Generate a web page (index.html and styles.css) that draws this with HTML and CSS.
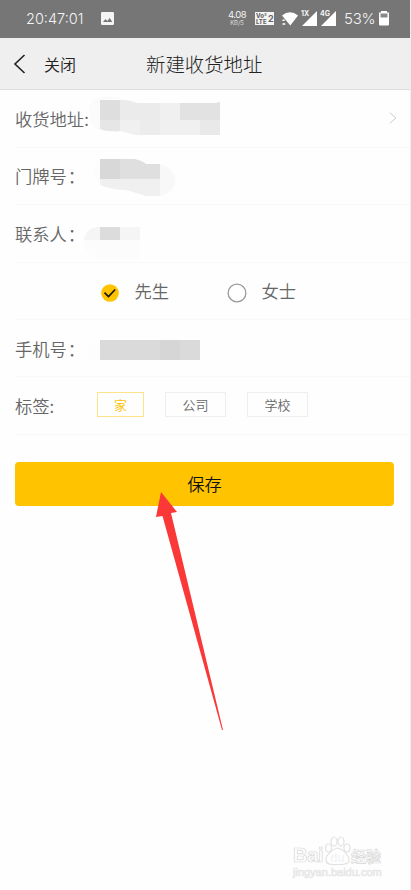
FILE: index.html
```
<!DOCTYPE html>
<html lang="zh-CN">
<head>
<meta charset="utf-8">
<title>新建收货地址</title>
<link rel="stylesheet" href="styles.css">
</head>
<body>
<div class="screen">
  <div class="status">
    <span class="clock">20:47:01</span>
    <svg class="photo" width="13" height="13" viewBox="0 0 13 13"><rect width="13" height="13" rx="1.2" fill="#f4f4f4"/><path d="M2 10l2.500-3 1.800 2 2.400-3L11.300 10z" fill="#767676"/></svg>
    <span class="speed"><b>4.08</b><i>KB/S</i></span>
    <span class="volte"><span class="vo"><b>Vo²</b><b>LTE</b></span><span>2</span></span>
    <svg class="wifi" width="16" height="14" viewBox="0 0 16 14"><path d="M0 3.500Q8-2.800 16 3.500L8.300 13.500z" fill="#fff"/><path d="M.5 8.300h2.200M.5 12h2.800" stroke="#fff" stroke-width="1.600"/></svg>
    <span class="signal"><svg width="15" height="15"><path d="M15 0v15H0z" fill="#fff"/></svg><em>1X</em></span>
    <span class="signal"><svg width="15" height="15"><path d="M15 0v15H0z" fill="#fff"/></svg><em>4G</em></span>
    <span class="percent">53%</span>
    <svg class="battery" width="10" height="15" viewBox="0 0 10 15"><path d="M2 0h6v1.500h2V13.500q0 1-1 1H1q-1 0-1-1v-12h2z" fill="#fff"/><path d="M1.500 2.500h7v4h-7z" fill="#888"/></svg>
  </div>
  <header class="nav">
    <svg class="back" width="13" height="20" viewBox="0 0 13 20"><path d="M11.500 1L2 10l9.500 9" fill="none" stroke="#222" stroke-width="1.600"/></svg>
    <span class="close">关闭</span>
    <h1>新建收货地址</h1>
  </header>
  <main class="form">
    <div class="row">
      <label>收货地址:</label>
      <svg class="mask" width="140" height="57" viewBox="85 90 140 57">
        <path d="M100 97Q89 99 89 112Q89 126 100 130z" fill="#fbfbfb"/>
        <path d="M97 99Q108 94 123 99H97z" fill="#fafafa"/>
        <clipPath id="a"><path d="M100 100h20q10 0 17 3h78l5-1v33h-85l-15-4q-13 1-20-2z"/></clipPath>
        <g clip-path="url(#a)"><path d="M100 100h120v35H100z" fill="#f0f0f0"/><path d="M100 100h20v20h-20z" fill="#dedede"/><path d="M100 120h20v15h-20z" fill="#e6e6e6"/><path d="M120 100h40v20h-40z" fill="#ebebeb"/><path d="M140 120h20v15h-20z" fill="#ececec"/><path d="M180 100h40v20h-40z" fill="#e2e2e2"/><path d="M200 120h20v15h-20z" fill="#e9e9e9"/></g>
      </svg>
      <svg class="arrow" width="8" height="12" viewBox="0 0 8 12"><path d="M.8.8L7 6 .8 11.200" fill="none" stroke="#ccc"/></svg>
    </div>
    <div class="row">
      <label>门牌号<span>：</span></label>
      <svg class="mask" width="140" height="57" viewBox="85 148 140 57">
        <path d="M101 160Q94 163 94 173Q94 182 101 184z" fill="#fcfcfc"/>
        <path d="M155 165Q172 166 175 180Q176 193 160 197L150 195z" fill="#f8f8f8"/>
        <clipPath id="b"><path d="M100 160h34q7 1 12 5h14v32h-14l-20-6q-14 0-26-5z"/></clipPath>
        <g clip-path="url(#b)"><path d="M100 160h60v37h-60z" fill="#f0f0f0"/><path d="M100 160h60v20h-60z" fill="#dfdfdf"/><path d="M100 160h20v20h-20z" fill="#d8d8d8"/></g>
      </svg>
    </div>
    <div class="row">
      <label>联系人<span>：</span></label>
      <svg class="mask" width="140" height="57" viewBox="85 205 140 57"><path d="M100 227h40v32h-40Q84 256 84 241Q85 229 100 227z" fill="#fcfcfc"/><path d="M84 240Q86 227 100 227h40v13z" fill="#f5f5f5"/><path d="M100 227h20v13h-20z" fill="#dcdcdc"/></svg>
    </div>
    <div class="row choices">
      <span class="choice"><svg width="20" height="20"><circle cx="10" cy="10" r="8.800" fill="#ffc300"/><path d="M4.500 9.700l4 3.800 6.700-7" fill="none" stroke="#111" stroke-width="1.600"/></svg>先生</span>
      <span class="choice"><svg width="20" height="20"><circle cx="10" cy="10" r="8.900" fill="#fff" stroke="#999" stroke-width="1.300"/></svg>女士</span>
    </div>
    <div class="row">
      <label>手机号<span>：</span></label>
      <svg class="mask" width="140" height="57" viewBox="85 320 140 57"><path d="M100 339Q88 340 88 351Q88 362 100 363z" fill="#fdfdfd"/><path d="M100 340h100v20H100z" fill="#dadada"/><path d="M160 340h20v20h-20z" fill="#d6d6d6"/></svg>
    </div>
    <div class="row">
      <label>标签:</label>
      <div class="tags"><span class="tag selected">家</span><span class="tag">公司</span><span class="tag">学校</span></div>
    </div>
    <button class="save">保存</button>
  </main>
  <svg class="pointer" width="70" height="240" viewBox="155 491 70 240"><path d="M161 492L177 512l-6 1L223 730l-1 0L162.500 516l-6.500 1z" fill="#fa3838"/></svg>
  <div class="watermark">
    <div class="brand"><span class="latin">Bai</span><svg width="27" height="30" viewBox="0 0 27 30"><g fill="#fff" stroke="#e2e2e2" stroke-width="1.200"><path d="M13.500 12C8 13 1 20 2 24.500c1 5 7 4 12 4s11 0 11-4.500-6-11-11.500-12z"/><ellipse cx="4.500" cy="12" rx="3" ry="4"/><ellipse cx="10" cy="5.500" rx="3" ry="4.500"/><ellipse cx="17" cy="5.500" rx="3" ry="4.500"/><ellipse cx="23" cy="12" rx="3" ry="4"/></g><text x="13.500" y="26" text-anchor="middle">du</text></svg><span class="cn">经验</span></div>
    <div class="site">jingyan.baidu.com</div>
  </div>
</div>
</body>
</html>
```
FILE: styles.css
```
* { box-sizing: border-box; }
body { margin: 0; background: #fff; font-family: "Noto Sans CJK SC", sans-serif; font-weight: 350; color: #666; }
.screen { position: relative; width: 411px; height: 890px; overflow: hidden; border-right: 1px solid #eee; background: #fefefe; }
.status { height: 38px; background: #767676; color: #f4f4f4; display: flex; align-items: center; padding: 0 0 1px 26px; font-family: Inter, Roboto, sans-serif; font-weight: 300; }
.clock { font-size: 14.500px; width: 75px; white-space: nowrap; }
.speed { width: 18px; margin-left: 114px; display: flex; flex-direction: column; align-items: center; line-height: 8px; }
.speed b { font-size: 9.500px; font-weight: 400; letter-spacing: -.5px; }
.speed i { font-size: 6px; line-height: 7px; font-style: normal; }
.volte { display: flex; align-items: center; width: 19px; height: 13px; margin-left: 9px; background: #f4f4f4; color: #666; font-size: 9px; font-weight: 700; line-height: 13px; }
.vo { width: 13px; display: flex; flex-direction: column; padding-left: 1px; font-size: 6px; line-height: 6px; }
.vo b { font-weight: 800; }
.wifi { margin-left: 8px; }
.signal { position: relative; width: 15px; height: 15px; margin-left: 4px; }
.signal svg { display: block; }
.signal em { position: absolute; left: -1px; top: -1px; font-size: 7px; line-height: 8px; font-weight: 700; font-style: normal; }
.percent { width: 31px; margin-left: 8px; font-size: 15px; letter-spacing: -.2px; }
.battery { margin-left: 4px; }
.nav { height: 52px; background: #efefef; border-bottom: 1px solid #ddd; display: grid; grid-template-columns: 31px 102px 1fr; align-items: center; padding-left: 13px; color: #222; }
.close { font-size: 16px; }
h1 { margin: 0; font-size: 19.400px; font-weight: 300; }
.form { padding-top: .4px; }
.row { height: 57.400px; margin-left: 15px; border-bottom: 1px solid #f8f8f8; display: flex; align-items: center; }
label { width: 70px; font-size: 17.300px; white-space: nowrap; }
label span { margin-left: 1px; }
.mask { display: block; flex: none; overflow: visible; }
.arrow { margin: -2px 0 0 164px; }
.choices { padding-left: 85px; }
.choice { display: flex; align-items: center; width: 127px; gap: 14.500px; font-size: 17.300px; }
.choice svg { margin-top: 4px; }
.tags { display: flex; gap: 21px; margin: -3px 0 0 12px; font-size: 13px; }
.tag { width: 61px; height: 25px; border: 1px solid #eee; display: flex; align-items: center; justify-content: center; }
.tag.selected { width: 47px; border-color: #ffe389; color: #ffc300; }
.save { display: block; width: 379px; height: 44px; margin: 26.800px 0 0 15px; padding: 0; border: 0; border-radius: 4px; background: #ffc300; color: #111; font: 350 17.300px "Noto Sans CJK SC", sans-serif; }
.pointer { position: absolute; left: 155px; top: 491px; }
.watermark { position: absolute; left: 293px; top: 836px; width: 92px; color: #fff; font-family: "Liberation Sans", "Noto Sans CJK SC", sans-serif; -webkit-text-stroke: .7px #d8d8d8; }
.brand { display: flex; align-items: flex-end; height: 30px; }
.brand svg { flex: none; }
.latin { font-size: 20px; line-height: 21px; width: 31px; font-weight: 700; letter-spacing: -.3px; }
.brand text { font-size: 12px; font-weight: 700; fill: #f4f4f4; }
.cn { font-size: 15px; line-height: 19px; font-weight: 700; }
.site { font-size: 11px; line-height: 13px; color: #f4f4f4; white-space: nowrap; -webkit-text-stroke-color: #e6e6e6; }
```
